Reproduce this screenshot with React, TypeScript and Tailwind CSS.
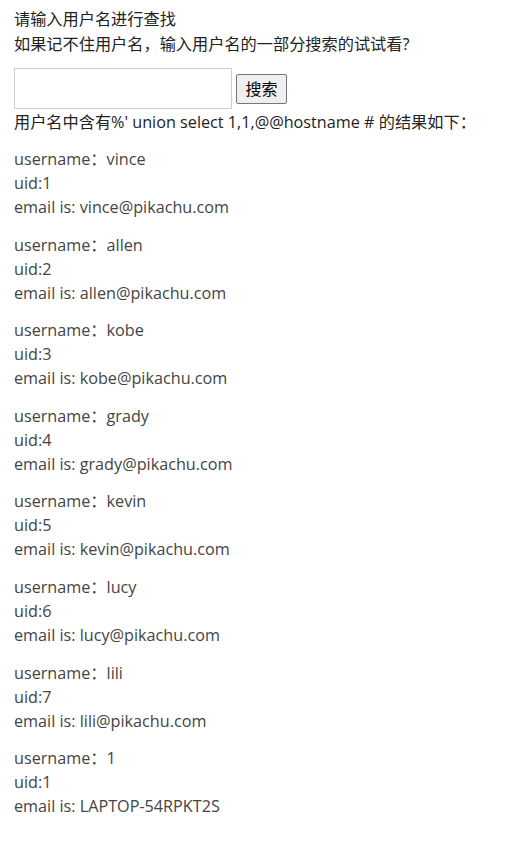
const rows = [
  { name: 'vince', uid: '1', email: 'vince@pikachu.com' },
  { name: 'allen', uid: '2', email: 'allen@pikachu.com' },
  { name: 'kobe', uid: '3', email: 'kobe@pikachu.com' },
  { name: 'grady', uid: '4', email: 'grady@pikachu.com' },
  { name: 'kevin', uid: '5', email: 'kevin@pikachu.com' },
  { name: 'lucy', uid: '6', email: 'lucy@pikachu.com' },
  { name: 'lili', uid: '7', email: 'lili@pikachu.com' },
  { name: '1', uid: '1', email: 'LAPTOP-54RPKT2S' },
];

export default function App() {
  return (
    <div
      className="min-h-[842px] bg-white px-[14px] pt-[7px] text-[16.2px] leading-[24px] text-[#333]"
      style={{ fontFamily: '"Open Sans", "Noto Sans CJK SC", sans-serif' }}
    >
      <p className="leading-[25px] text-[#222]">
        请输入用户名进行查找
        <br />
        如果记不住用户名，输入用户名的一部分搜索的试试看?
      </p>

      <form className="mt-[11px] flex items-center gap-[4px]" onSubmit={(e) => e.preventDefault()}>
        <input
          type="text"
          className="h-[41px] w-[218px] border border-[#ccc] bg-white px-2 outline-none"
        />
        <button
          type="submit"
          className="h-[30px] w-[51px] rounded-[2px] border border-[#767676] bg-[#efefef] text-[16px] leading-none text-black"
        >
          搜索
        </button>
      </form>

      <p className="mt-[1px] text-[#222]">用户名中含有%' union select 1,1,@@hostname # 的结果如下：</p>

      <div className="mt-[13px]">
        {rows.map((r, i) => (
          <p key={i} className="mb-[13.6px] text-[#444]">
            username：{r.name}
            <br />
            uid:{r.uid}
            <br />
            email is: {r.email}
          </p>
        ))}
      </div>
    </div>
  );
}
